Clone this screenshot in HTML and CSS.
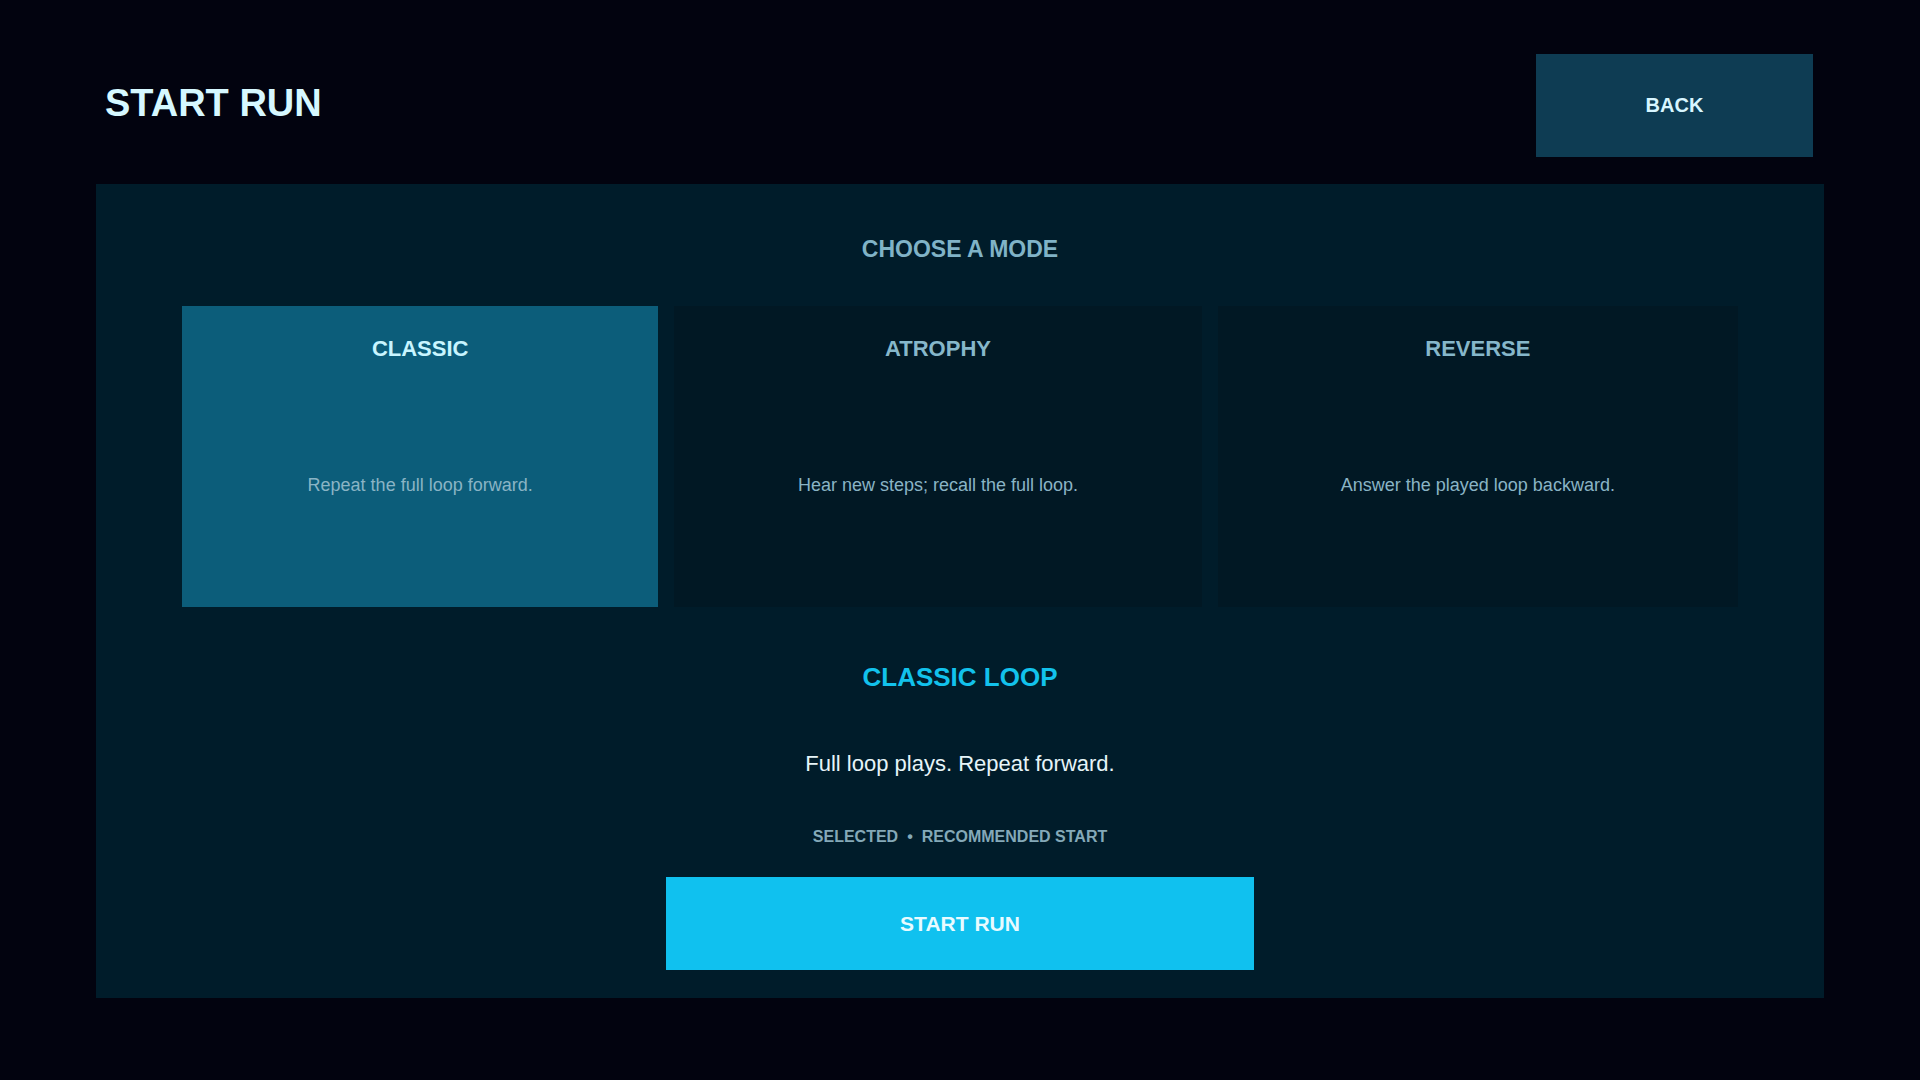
FILE: index.html
```html
<!DOCTYPE html>
<html lang="en">
<head>
    <meta charset="UTF-8">
    <meta name="viewport" content="width=device-width, initial-scale=1.0">
    <title>Start Run</title>
    <link rel="stylesheet" href="styles.css">
</head>
<body>
    <header class="top">
        <h1>START RUN</h1>
        <button class="back">BACK</button>
    </header>
    <main class="panel">
        <h2 class="panel-title">CHOOSE A MODE</h2>
        <div class="modes">
            <div class="mode selected">
                <h3>CLASSIC</h3>
                <p>Repeat the full loop forward.</p>
            </div>
            <div class="mode">
                <h3>ATROPHY</h3>
                <p>Hear new steps; recall the full loop.</p>
            </div>
            <div class="mode">
                <h3>REVERSE</h3>
                <p>Answer the played loop backward.</p>
            </div>
        </div>
        <h2 class="mode-name">CLASSIC LOOP</h2>
        <p class="mode-desc">Full loop plays. Repeat forward.</p>
        <p class="meta"><span>SELECTED</span><span class="dot">&bull;</span><span>RECOMMENDED START</span></p>
        <button class="start">START RUN</button>
    </main>
</body>
</html>
```

FILE: styles.css
```css
body {
    font-family: "Liberation Sans", Arial, sans-serif;
    margin: 0;
    padding: 0;
    background-color: #02030f;
    color: #d8f6ff;
    min-height: 1080px;
}
h1, h2, h3, p {
    margin: 0;
    line-height: 1.2;
}
button {
    font-family: inherit;
    border: none;
    cursor: pointer;
}
.top {
    width: 1728px;
    box-sizing: border-box;
    margin: 0 auto;
    padding: 54px 11px 0 9px;
    display: flex;
    align-items: center;
    justify-content: space-between;
}
.top h1 {
    font-size: 38px;
    font-weight: bold;
    color: #d6f8ff;
    margin-bottom: 4px;
}
.back {
    width: 277px;
    height: 103px;
    background-color: #0e3c53;
    color: #d8f6ff;
    font-size: 20px;
    font-weight: bold;
}
.panel {
    width: 1728px;
    box-sizing: border-box;
    margin: 27px auto 0;
    padding: 52px 86px 28px;
    background-color: #001c2a;
    display: flex;
    flex-direction: column;
    align-items: center;
}
.panel-title {
    font-size: 23px;
    font-weight: bold;
    color: #80b3c7;
}
.modes {
    align-self: stretch;
    margin-top: 42px;
    display: grid;
    grid-template-columns: 476fr 527fr 520fr;
    gap: 16px;
}
.mode {
    height: 301px;
    box-sizing: border-box;
    padding: 30px 20px 0;
    background-color: #011824;
    text-align: center;
}
.mode.selected {
    background-color: #0c5d7a;
}
.mode h3 {
    font-size: 22px;
    font-weight: bold;
    color: #86b7ca;
}
.mode.selected h3 {
    color: #c8f5ff;
}
.mode p {
    margin-top: 113px;
    font-size: 18px;
    color: #8ab4c5;
}
.mode-name {
    margin-top: 55px;
    font-size: 26px;
    font-weight: bold;
    color: #12c2ec;
}
.mode-desc {
    margin-top: 58px;
    font-size: 22px;
    color: #e6f4f8;
}
.meta {
    margin-top: 50px;
    font-size: 16px;
    font-weight: bold;
    color: #84a9b8;
    display: flex;
    gap: 9px;
}
.start {
    margin-top: 31px;
    width: 588px;
    height: 93px;
    background-color: #10c1ef;
    color: #e8fbff;
    font-size: 21px;
    font-weight: bold;
}
```
